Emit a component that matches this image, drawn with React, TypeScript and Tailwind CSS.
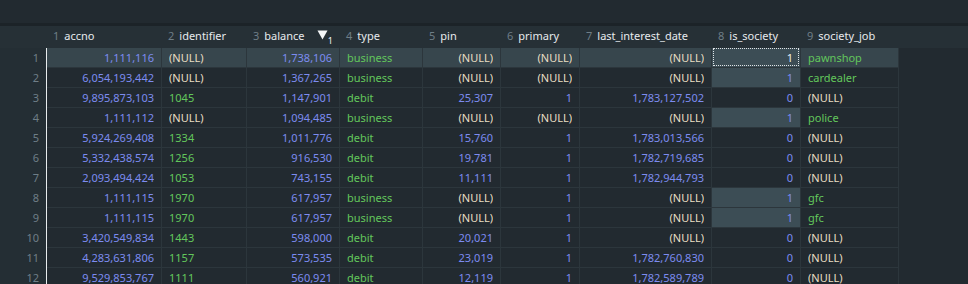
import React from "react";

type Col = { name: string; w: number; num: boolean };

const cols: Col[] = [
  { name: "accno", w: 115, num: true },
  { name: "identifier", w: 85, num: false },
  { name: "balance", w: 93, num: true },
  { name: "type", w: 83, num: false },
  { name: "pin", w: 78, num: true },
  { name: "primary", w: 79, num: true },
  { name: "last_interest_date", w: 132, num: true },
  { name: "is_society", w: 89, num: true },
  { name: "society_job", w: 98, num: false },
];

type Cell = string | null;

const rows: Cell[][] = [
  ["1,111,116", null, "1,738,106", "business", null, null, null, "1", "pawnshop"],
  ["6,054,193,442", null, "1,367,265", "business", null, null, null, "1", "cardealer"],
  ["9,895,873,103", "1045", "1,147,901", "debit", "25,307", "1", "1,783,127,502", "0", null],
  ["1,111,112", null, "1,094,485", "business", null, null, null, "1", "police"],
  ["5,924,269,408", "1334", "1,011,776", "debit", "15,760", "1", "1,783,013,566", "0", null],
  ["5,332,438,574", "1256", "916,530", "debit", "19,781", "1", "1,782,719,685", "0", null],
  ["2,093,494,424", "1053", "743,155", "debit", "11,111", "1", "1,782,944,793", "0", null],
  ["1,111,115", "1970", "617,957", "business", null, "1", null, "1", "gfc"],
  ["1,111,115", "1970", "617,957", "business", null, "1", null, "1", "gfc"],
  ["3,420,549,834", "1443", "598,000", "debit", "20,021", "1", null, "0", null],
  ["4,283,631,806", "1157", "573,535", "debit", "23,019", "1", "1,782,760,830", "0", null],
  ["9,529,853,767", "1111", "560,921", "debit", "12,119", "1", "1,782,589,789", "0", null],
];

function SortMark() {
  return (
    <span className="ml-auto mr-[7px] flex items-start">
      <svg width="11" height="10" viewBox="0 0 11 10" className="mt-[1px]">
        <path d="M0.5 0.5 H10.5 L5.5 9.5 Z" fill="#f4f6f8" />
      </svg>
      <span className="mt-[7px] text-[9px] leading-none text-[#f0f2f4]">1</span>
    </span>
  );
}

function App() {
  return (
    <div
      className="w-[968px] h-[284px] overflow-hidden bg-[#222a30] text-[11px]"
      style={{ fontFamily: '"Noto Sans", "Liberation Sans", sans-serif' }}
    >
      <div className="h-[23px] bg-[#222a30]" />
      <div className="h-[3px] bg-[#1c2328]" />
      {/* header */}
      <div className="flex h-[22px] bg-[#263036] border-b border-[#263036]">
        <div className="w-[47px] shrink-0" />
        {cols.map((c, i) => (
          <div
            key={c.name}
            style={{ width: c.w }}
            className="shrink-0 flex items-center pl-[6px]"
          >
            <span className="text-[#6f7e87] mr-[5px]">{i + 1}</span>
            <span className="text-[#e6eaed]">{c.name}</span>
            {c.name === "balance" && <SortMark />}
          </div>
        ))}
      </div>
      {rows.map((r, ri) => {
        const sel = ri === 0;
        return (
          <div key={ri} className="flex h-[20px]">
            <div className="w-[46px] shrink-0 bg-[#242e34] border-b border-[#242e34] text-right pr-[7px] leading-[19px] text-[#6f7e87]">
              {ri + 1}
            </div>
            <div className="w-px shrink-0 bg-[#e8ecee]" />
            {r.map((v, ci) => {
              const c = cols[ci];
              const hi = c.name === "is_society" && v === "1";
              const focus = sel && c.name === "is_society";
              const bg = hi ? "bg-[#3c4d55]" : sel ? "bg-[#37464d]" : "bg-[#222a30]";
              let color = c.num ? "text-[#7d8cf0]" : "text-[#62c75c]";
              if (v === null) color = "text-[#e9dfc4]";
              if (focus) color = "text-[#eef1f3]";
              return (
                <div
                  key={ci}
                  style={{ width: c.w }}
                  className={`shrink-0 border-r border-b border-[#2c363c] relative leading-[19px] whitespace-nowrap ${bg} ${color} ${
                    c.num ? "text-right pr-[7px]" : "text-left pl-[7px]"
                  }`}
                >
                  <span className="block overflow-hidden">{v === null ? "(NULL)" : v}</span>
                  {focus && (
                    <div className="absolute left-[1px] top-0 right-[1px] bottom-[1px] border border-dotted border-[#dfe3e6]" />
                  )}
                </div>
              );
            })}
          </div>
        );
      })}
    </div>
  );
}

export default App;
